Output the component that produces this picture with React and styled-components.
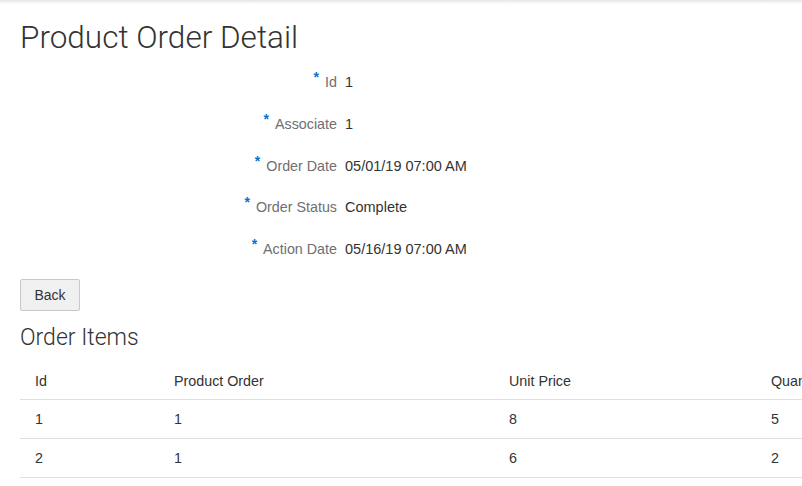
import React from "react";
import styled, { createGlobalStyle } from "styled-components";

const Global = createGlobalStyle`
  html, body { margin: 0; padding: 0; background: #fff; overflow: hidden; }
  body { font-family: "Liberation Sans", Arial, sans-serif; color: #333; }
`;

const TopShadow = styled.div`
  height: 4px;
  background: linear-gradient(#e6e6e6, #fff);
`;

const Page = styled.main`
  padding: 0 20px;
`;

const Title = styled.h1`
  margin: 14px 0 0;
  font-family: Roboto, "Liberation Sans", sans-serif;
  font-weight: 300;
  font-size: 31.5px;
  line-height: 40px;
  color: #333;
`;

const Form = styled.div`
  display: grid;
  grid-template-columns: 317px 1fr;
  grid-auto-rows: 41.75px;
  column-gap: 8px;
  margin-top: 12px;
`;

const Label = styled.div`
  text-align: right;
  font-size: 14.3px;
  color: #6f6f6f;
  line-height: 20px;
  padding-top: 2px;
`;

const Req = styled.span`
  color: #0572ce;
  font-size: 14px;
  font-weight: bold;
  position: relative;
  top: -5px;
  margin-right: 6px;
`;

const Value = styled.div`
  font-size: 14.5px;
  color: #333;
  line-height: 20px;
  padding-top: 2px;
`;

const Button = styled.button`
  display: block;
  margin-top: 0;
  width: 60px;
  height: 32px;
  background: #f0f0f0;
  border: 1px solid #c8c8c8;
  border-radius: 2px;
  font-family: "Liberation Sans", Arial, sans-serif;
  font-size: 14px;
  color: #333;
  padding: 0;
`;

const SubTitle = styled.h2`
  margin: 13px 0 0;
  font-family: Roboto, "Liberation Sans", sans-serif;
  font-weight: 300;
  font-size: 23px;
  line-height: 28px;
  color: #333;
`;

const Table = styled.table`
  margin-top: 10px;
  border-collapse: collapse;
  table-layout: fixed;
  width: 900px;
  font-size: 14.3px;
  color: #333;
`;

const Th = styled.th`
  box-sizing: border-box;
  text-align: left;
  font-weight: normal;
  padding: 0 15px;
  height: 38px;
  border-bottom: 1px solid #e0e0e0;
  width: ${(p) => p.$w}px;
  white-space: nowrap;
  overflow: hidden;
`;

const Td = styled.td`
  padding: 0 15px;
  height: 38px;
  border-bottom: 1px solid #e0e0e0;
`;

const fields = [
  ["Id", "1"],
  ["Associate", "1"],
  ["Order Date", "05/01/19 07:00 AM"],
  ["Order Status", "Complete"],
  ["Action Date", "05/16/19 07:00 AM"],
];

const cols = [
  ["Id", 139],
  ["Product Order", 335],
  ["Unit Price", 262],
  ["Quantity", 164],
];

const rows = [
  ["1", "1", "8", "5"],
  ["2", "1", "6", "2"],
];

export default function App() {
  return (
    <>
      <Global />
      <TopShadow />
      <Page>
        <Title>Product Order Detail</Title>
        <Form>
          {fields.map(([l, v]) => (
            <React.Fragment key={l}>
              <Label>
                <Req>*</Req>
                {l}
              </Label>
              <Value>{v}</Value>
            </React.Fragment>
          ))}
        </Form>
        <Button>Back</Button>
        <SubTitle>Order Items</SubTitle>
        <Table>
          <thead>
            <tr>
              {cols.map(([c, w]) => (
                <Th key={c} $w={w}>{c}</Th>
              ))}
            </tr>
          </thead>
          <tbody>
            {rows.map((r, i) => (
              <tr key={i}>
                {r.map((c, j) => (
                  <Td key={j}>{c}</Td>
                ))}
              </tr>
            ))}
          </tbody>
        </Table>
      </Page>
    </>
  );
}
